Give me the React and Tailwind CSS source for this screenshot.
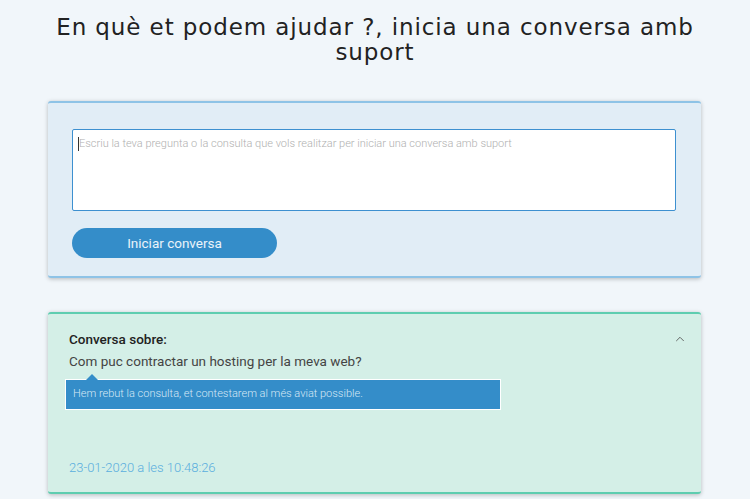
import { ChevronUp } from 'lucide-react';

export default function App() {
  return (
    <div className="min-h-[499px] bg-[#f1f6fa] pt-[15px] pb-4" style={{ fontFamily: 'Roboto, "Liberation Sans", sans-serif' }}>
      {/* Title */}
      <h1
        className="mx-auto w-[660px] text-center text-[23px] leading-[25px] tracking-[0.9px] text-[#222]"
        style={{ fontFamily: '"DejaVu Sans", "Open Sans", sans-serif' }}
      >
        En què et podem ajudar ?, inicia una conversa amb suport
      </h1>

      {/* New conversation card */}
      <div className="mx-[48px] mt-[36px] w-[653px] rounded-[3px] border-t-2 border-b-2 border-[#8ec3e6] bg-[#e1edf6] px-[24px] pt-[26px] pb-[18px] shadow-[0_1px_4px_rgba(0,0,0,0.25)]">
        <div className="relative h-[82px] w-[604px] rounded-[2px] border border-[#3d90d0] bg-white">
          <span className="absolute left-[5px] top-[7px] h-[14px] w-[1px] bg-[#333]" />
          <p className="pl-[6px] pt-[6px] text-[11px] font-light text-[#b0b0b0]">
            Escriu la teva pregunta o la consulta que vols realitzar per iniciar una conversa amb suport
          </p>
        </div>
        <button className="mt-[17px] h-[30px] w-[205px] rounded-full bg-[#348dc9] text-[13.5px] text-white/90">
          Iniciar conversa
        </button>
      </div>

      {/* Conversation card */}
      <div className="mx-[48px] mt-[34px] h-[182px] w-[653px] rounded-[3px] border-t-2 border-b-2 border-[#5ecdb0] bg-[#d4efe7] shadow-[0_1px_4px_rgba(0,0,0,0.25)]">
        <div className="flex justify-between pl-[21px] pr-[14px] pt-[17px]">
          <div>
            <p className="text-[13.5px] font-medium leading-[16px] text-[#222]">Conversa sobre:</p>
            <p className="mt-[6px] text-[13.5px] leading-[16px] text-[#444]">
              Com puc contractar un hosting per la meva web?
            </p>
          </div>
          <ChevronUp size={14} strokeWidth={1.5} className="mt-[1px] text-[#555]" />
        </div>
        <div className="relative ml-[17px] mt-[10px] flex h-[31px] w-[436px] items-center border border-white bg-[#348dc9] px-[7px]">
          <span className="absolute left-[20px] top-[-6px] h-0 w-0 border-x-[6px] border-b-[6px] border-x-transparent border-b-[#348dc9]" />
          <p className="text-[11px] font-light text-[#d6e8f5]">
            Hem rebut la consulta, et contestarem al més aviat possible.
          </p>
        </div>
        <p className="ml-[21px] mt-[50px] text-[13px] font-light leading-[16px] text-[#5aaede]">23-01-2020 a les 10:48:26</p>
      </div>
    </div>
  );
}
